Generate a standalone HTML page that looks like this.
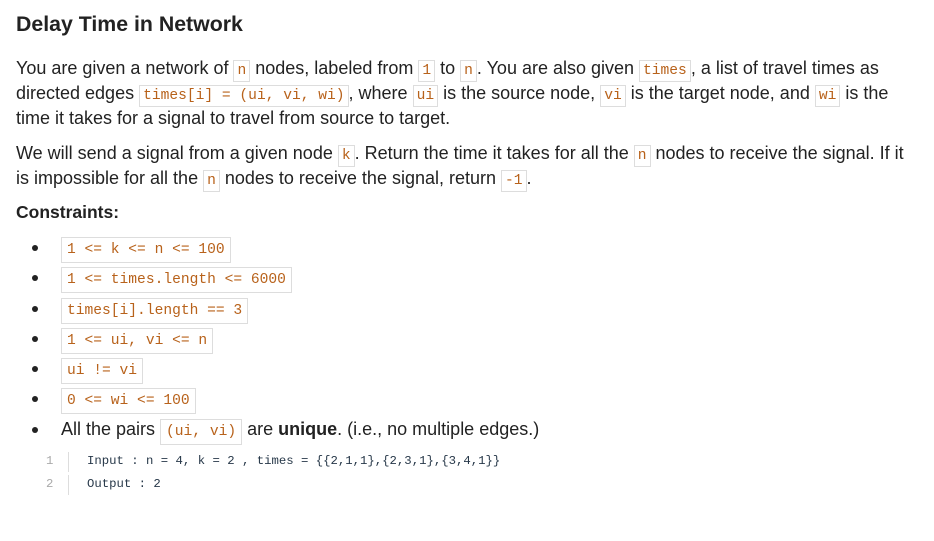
<!DOCTYPE html>
<html><head><meta charset="utf-8"><style>
body{margin:0;background:#fff;width:934px;height:541px;overflow:hidden;font-family:"Liberation Sans",sans-serif;color:#222;}
h1{position:absolute;left:16px;top:12px;margin:0;font-size:21.3px;font-weight:bold;color:#222;}
p{margin:0;font-size:18px;line-height:25px;white-space:nowrap;}
code{font-family:"Liberation Mono",monospace;font-size:14.6px;line-height:1;color:#b8621b;border:1px solid #ddd;padding:2px 3px;}
.p1{position:absolute;left:16px;top:56px;}
.p2{position:absolute;left:16px;top:141px;}
.c{position:absolute;left:16px;top:202px;font-size:17.5px;font-weight:bold;}
ul{position:absolute;left:0;top:232px;margin:0;padding:0;list-style:none;}
li{position:relative;height:30.3px;padding-left:61px;font-size:18px;line-height:30px;white-space:nowrap;}
li:before{content:"";position:absolute;left:32px;top:13px;width:6px;height:6px;border-radius:50%;background:#222;}
li code{padding:4px 5px;}
.cb{position:absolute;left:0;top:450px;font-family:"Liberation Mono",monospace;font-size:12.3px;color:#273849;}
.ln{position:absolute;left:46px;width:12px;color:#aaa;}
.bar{position:absolute;left:68px;width:1px;height:20px;background:#ddd;}
.tx{position:absolute;left:87px;white-space:pre;}
</style></head><body>
<h1>Delay Time in Network</h1>
<p class="p1">You are given a network of <code>n</code> nodes, labeled from <code>1</code> to <code>n</code>. You are also given <code>times</code>, a list of travel times as<br>directed edges <code>times[i] = (ui, vi, wi)</code>, where <code>ui</code> is the source node, <code>vi</code> is the target node, and <code>wi</code> is the<br>time it takes for a signal to travel from source to target.</p>
<p class="p2">We will send a signal from a given node <code>k</code>. Return the time it takes for all the <code>n</code> nodes to receive the signal. If it<br>is impossible for all the <code>n</code> nodes to receive the signal, return <code>-1</code>.</p>
<div class="c">Constraints:</div>
<ul>
<li><code>1 &lt;= k &lt;= n &lt;= 100</code></li>
<li><code>1 &lt;= times.length &lt;= 6000</code></li>
<li><code>times[i].length == 3</code></li>
<li><code>1 &lt;= ui, vi &lt;= n</code></li>
<li><code>ui != vi</code></li>
<li><code>0 &lt;= wi &lt;= 100</code></li>
<li>All the pairs <code>(ui, vi)</code> are <b>unique</b>. (i.e., no multiple edges.)</li>
</ul>
<div class="cb">
<div class="ln" style="top:4px">1</div><div class="bar" style="top:2px"></div><div class="tx" style="top:4px">Input : n = 4, k = 2 , times = {{2,1,1},{2,3,1},{3,4,1}}</div>
<div class="ln" style="top:27px">2</div><div class="bar" style="top:25px"></div><div class="tx" style="top:27px">Output : 2</div>
</div>
</body></html>
